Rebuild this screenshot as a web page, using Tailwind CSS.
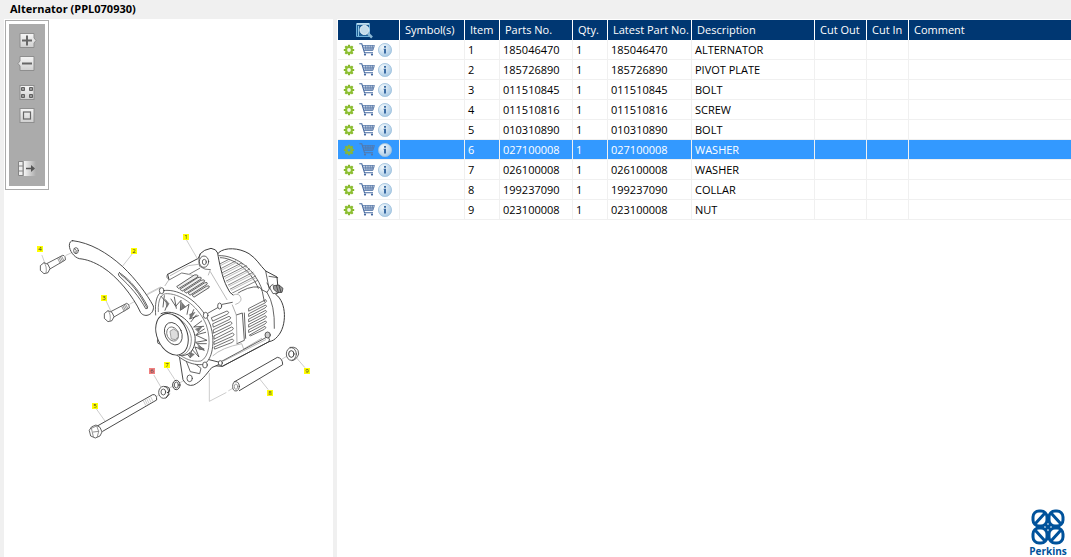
<!DOCTYPE html>
<html lang="en">
<head>
    <meta charset="UTF-8">
    <meta name="viewport" content="width=device-width, initial-scale=1.0">
    <script src="https://cdn.jsdelivr.net/npm/@tailwindcss/browser@4"></script>
    <title>Alternator (PPL070930)</title>
</head>
<body class="h-screen flex flex-col bg-[#f0f0f0] text-black text-[11px] leading-4 font-['Open_Sans','Noto_Sans',sans-serif]">

    <!-- shared icons -->
    <svg class="absolute h-0 w-0">
        <linearGradient id="btnFill" x1="0" y1="0" x2="0" y2="1"><stop offset="0" stop-color="#f6f6f6"/><stop offset="1" stop-color="#cfcfcf"/></linearGradient>
        <linearGradient id="exitFill"><stop offset="0" stop-color="#f4f4f4"/><stop offset="1" stop-color="#ababab"/></linearGradient>
        <radialGradient id="infoFill" cx=".35" cy=".3" r=".8"><stop offset="0" stop-color="#f2f8fc"/><stop offset="1" stop-color="#a3c6e3"/></radialGradient>
        <symbol id="gear" viewBox="0 0 12 12">
            <g stroke="#86b82c" stroke-width="2.2"><path d="M6 .8V11.200M.8 6H11.200M2.300 2.300L9.700 9.700M9.700 2.300L2.300 9.700"/></g>
            <circle cx="6" cy="6" r="3.900" fill="#8cbf30"/>
            <circle cx="6" cy="6" r="1.900" fill="#f4fae8"/>
        </symbol>
        <symbol id="gearOn" viewBox="0 0 12 12">
            <g stroke="#7fb243" stroke-width="2.2"><path d="M6 .8V11.200M.8 6H11.200M2.300 2.300L9.700 9.700M9.700 2.300L2.300 9.700"/></g>
            <circle cx="6" cy="6" r="3.900" fill="#86b83c"/>
            <circle cx="6" cy="6" r="1.500" fill="#3399ff"/>
        </symbol>
        <symbol id="cart" viewBox="0 0 16 13">
            <path d="M3.500 2.500H15.500L13.800 7.500L5 8Z" fill="currentColor" fill-opacity=".15"/>
            <path d="M.3 .8H2.800L5.500 9.800H14" fill="none" stroke="currentColor" stroke-width="1.100"/>
            <path d="M3.500 2.500H15.500L13.800 7.500H5M4.200 4.200H15M4.700 5.900H14.400M6.500 2.500L7 7.500M9 2.500V7.500M11.300 2.500L11 7.500M13.500 2.500L12.800 7.500" fill="none" stroke="currentColor" stroke-width=".7"/>
            <circle cx="6" cy="11.600" r="1.100" fill="currentColor"/><circle cx="13" cy="11.600" r="1.100" fill="currentColor"/>
        </symbol>
        <symbol id="info" viewBox="0 0 14 14">
            <circle cx="7" cy="7" r="6.600" fill="url(#infoFill)" stroke="#9fc1dd" stroke-width=".8"/>
            <path d="M6 3H8V4.700H6ZM5.500 5.800H8V10.500H6V6.500H5.500Z" fill="#3a6ba3"/>
        </symbol>
    </svg>

    <header class="h-[19px] shrink-0 pl-[10px]">
        <h1 class="font-bold leading-[18px]">Alternator (PPL070930)</h1>
    </header>

    <div class="flex flex-1 min-h-0 pl-1">
        <aside class="relative w-[329px] shrink-0 bg-white">
            <!-- zoom toolbar -->
            <div class="absolute left-px top-px z-10 w-11 border border-[#ababab] bg-white p-[3px]">
                <div class="flex h-[162px] flex-col items-center bg-[#ababab] pt-2">
                    <button aria-label="Zoom in" class="h-[17px] w-5">
                        <svg viewBox="0 0 20 17" class="h-[17px] w-5"><path d="M3 1.500H17V6L19 8.500L17 11V15.500H3Z" fill="url(#btnFill)" stroke="#8e8e8e"/><path d="M10 3.500V13.500M5 8.500H15" stroke="#666" stroke-width="2"/></svg>
                    </button>
                    <button aria-label="Zoom out" class="mt-[6px] h-[17px] w-5">
                        <svg viewBox="0 0 20 17" class="h-[17px] w-5"><path d="M3 1.500H17V15.500H3V11L1 8.500L3 6Z" fill="url(#btnFill)" stroke="#8e8e8e"/><path d="M5 8.500H15" stroke="#666" stroke-width="2"/></svg>
                    </button>
                    <button aria-label="Fit to window" class="mt-3 h-[17px] w-5">
                        <svg viewBox="0 0 20 17" class="h-[17px] w-5"><rect x="3" y="1.500" width="14" height="14" fill="url(#btnFill)" stroke="#8e8e8e"/><g fill="#999" stroke="#606060"><path d="M4.500 3.500H7.500V6.500H4.500ZM12.500 3.500H15.500V6.500H12.500ZM4.500 10.500H7.500V13.500H4.500ZM12.500 10.500H15.500V13.500H12.500Z"/></g></svg>
                    </button>
                    <button aria-label="Original size" class="mt-[6px] h-[17px] w-5">
                        <svg viewBox="0 0 20 17" class="h-[17px] w-5"><rect x="3" y="1.500" width="14" height="14" fill="url(#btnFill)" stroke="#8e8e8e"/><rect x="6.500" y="5" width="7" height="7" fill="none" stroke="#666" stroke-width="1.200"/></svg>
                    </button>
                    <button aria-label="Hide panel" class="mt-9 h-[17px] w-5">
                        <svg viewBox="0 0 20 17" class="h-[17px] w-5"><path d="M7 1H19V16H7Z" fill="url(#exitFill)"/><path d="M1.500 1.500H6V15.500H1.500ZM1.500 6H6M1.500 11H6" fill="#eee" stroke="#858585"/><path d="M9 8.500H16" stroke="#555" stroke-width="1.500"/><path d="M14 5L18 8.500L14 12Z" fill="#555"/></svg>
                    </button>
                </div>
            </div>

            <!-- exploded view -->
            <svg viewBox="4 19 329 430" class="block w-full" fill="none" stroke="#3c3c3c" stroke-width="2.400" stroke-linejoin="round" stroke-linecap="round" role="img" aria-label="Alternator exploded view">
                <!-- bracket and bolts 3, 4 -->
                <g transform="translate(30 230) scale(.33333)">
                    <path d="M36 76L44 98M308 70L278 108M228 212L242 242M108 76L138 62M300 222L390 174" stroke="#aaa" stroke-width="1.800"/>
                    <path d="M128 32C180 38 232 68 278 110C318 148 352 194 370 228C374 252 346 266 332 248C308 196 262 140 218 112C192 96 170 88 148 86C132 82 118 62 118 46C118 38 122 32 128 32Z" fill="#fff" stroke-width="2.800"/>
                    <ellipse cx="138" cy="62" rx="7" ry="9"/><path d="M134 56Q142 60 138 69" />
                    <path d="M268 128C300 148 332 188 353 230Q354 238 347 236C328 200 300 168 267 138Q262 130 268 128ZM272 134C304 158 330 192 350 232"/>
                    <path d="M52 100L98 76Q107 76 106 90L58 118" fill="#fff"/><path d="M83 85L90 99M87 83L94 97M91 81L98 94M95 79L102 92" stroke="#777"/>
                    <path d="M32 106L42 98L54 103L60 116L54 128L42 131L32 122Z" fill="#fff"/><path d="M42 98Q52 108 48 130" stroke="#888"/>
                    <path d="M244 244L290 220Q299 221 298 234L252 261" fill="#fff"/><path d="M275 229L282 243M279 227L286 241M283 225L290 238M287 223L294 236" stroke="#777"/>
                    <path d="M224 250L234 242L246 247L252 260L246 272L234 275L224 266Z" fill="#fff"/><path d="M234 242Q244 252 240 274" stroke="#888"/>
                </g>

                <!-- long bolt 5, washers 6 and 7, collar 8, nut 9 -->
                <g transform="translate(80 340) scale(.33333)">
                    <path d="M50 208L77 246M222 106L242 140M262 84L284 118M388 100V184L438 158M446 152L460 144M605 58L628 44M648 52L674 82M540 118L564 148M232 168L240 162M268 144L280 138M300 128L322 116" stroke="#aaa" stroke-width="1.800"/>
                    <path d="M52 258L218 164Q231 162 230 180L68 274" fill="#fff" stroke-width="2.800"/><path d="M190 182L197 196M195 179L202 193M200 176L207 190M206 173L213 187M212 170L219 184" stroke="#999" stroke-width="1.500"/>
                    <path d="M36 260L48 255L60 262L66 276L60 288L46 294L32 288L28 272Z" fill="#fff"/><path d="M34 264L40 290M36 264L50 258L56 274L52 290M40 276L56 274" stroke="#777"/>
                    <ellipse cx="251" cy="157" rx="15" ry="18" fill="#fff"/><ellipse cx="250" cy="156" rx="7" ry="9"/><path d="M254 140Q270 138 269 154L262 158M258 174L268 162" stroke-width="3"/>
                    <ellipse cx="289" cy="135" rx="11" ry="14" fill="#fff" stroke-width="3"/><ellipse cx="289" cy="135" rx="6" ry="9"/>
                    <path d="M462 126L592 52Q608 54 608 74L478 152" fill="#fff" stroke-width="2.800"/><ellipse cx="468" cy="139" rx="10" ry="14" fill="#fff"/><ellipse cx="468" cy="140" rx="5" ry="8" stroke="#888"/>
                    <path d="M630 22Q656 18 656 42Q650 60 636 62" fill="#fff"/><ellipse cx="634" cy="42" rx="15" ry="19" fill="#fff"/><ellipse cx="634" cy="42" rx="8" ry="10" stroke-width="3"/>
                </g>

                <!-- alternator body -->
                <g transform="translate(145 225) scale(.33333)">
                    <path d="M8 206L46 186" stroke="#aaa" stroke-width="1.800"/>
                    <path d="M222 82C240 66 282 68 312 86C334 100 344 120 362 138L396 156L400 202L392 208C426 232 426 304 398 334C390 344 382 348 372 350L232 424L180 420L122 400L190 120Z" fill="#fff" stroke-width="3"/>
                    <path d="M222 92C270 90 330 130 352 196M226 98C262 98 316 132 340 190"/>
                    <path d="M362 138L372 190M372 154L398 158M366 174L384 206L398 204M354 196L366 202Q390 240 388 310M366 202L374 190Q376 180 384 178"/>
                    <path d="M386 182L402 180L414 190L411 202L398 203L387 194Z" fill="#999" stroke-width="2.400"/><path d="M394 181L400 202M402 181L408 202"/>
                    <!-- rear vents -->
                    <g stroke="#555" stroke-width="2.200">
                        <path d="M226 116L250 104M229 130L272 108M232 143L290 114M236 156L304 122M244 168L314 132M250 180L324 142M256 192L332 153M262 204L338 166"/>
                        <path d="M228 121L256 107M231 135L278 111M235 148L294 118M241 160L308 126M247 172L318 136M253 184L327 147M259 196L334 158" stroke="#aaa"/>
                    </g>
                    <path d="M270 210Q310 182 342 186Q350 190 352 200L358 230"/>
                    <g stroke-width="2.200"><path d="M312 250L362 224Q368 228 360 234L312 258ZM312 266L362 240Q368 244 360 249L312 274ZM312 282L362 256Q368 260 360 265L312 290ZM312 298L362 272Q368 276 360 281L312 306ZM312 314L362 288Q368 292 360 297L312 322ZM314 330L360 304Q366 308 358 313L318 332Z"/></g>
                    <!-- mounting ear -->
                    <path d="M68 148L160 100L166 86Q176 74 198 70Q214 72 218 84C222 110 232 160 246 186Q256 208 270 204Q288 204 290 220L288 230L272 240L246 228L226 240L186 262L60 182Q50 178 72 164Z" fill="#fff" stroke="none"/>
                    <path d="M68 148L160 100L166 86Q176 74 198 70Q214 72 218 84C222 110 232 160 246 186Q254 206 264 210M72 164L68 148" stroke-width="3"/>
                    <path d="M68 148Q60 158 74 164L110 144L132 148L164 130M166 86Q158 108 164 124Q180 136 196 134" stroke="#555"/>
                    <path d="M76 152L130 122L160 118M128 148L158 154M196 140L246 224M196 134L190 150M264 210Q284 202 288 220Q290 232 272 238M60 182L72 164" stroke="#aaa"/>
                    <path d="M124 44L160 106" stroke="#aaa" stroke-width="1.800"/>
                    <ellipse cx="177" cy="110" rx="14" ry="17"/><ellipse cx="178" cy="111" rx="6" ry="8"/>
                    <!-- top vents -->
                    <path d="M96 184L148 150Q162 148 158 156L102 190ZM106 192L158 158Q172 154 168 162L112 198ZM118 198L168 166Q182 162 178 170L124 204ZM130 204L178 174Q190 170 186 178L136 210ZM142 210L184 184Q196 180 192 188L148 216Z" stroke-width="2.400" fill="#eee"/>
                    <!-- front side -->
                    <path d="M186 262L226 240L246 232L270 240L276 340L260 370L204 392Z" fill="#fff" stroke="none"/>
                    <path d="M190 264L218 248M232 238L262 232M274 270L292 264L298 346L276 356M298 264L302 340"/>
                    <path d="M262 240L274 270L276 356" stroke="#999"/>
                    <path d="M200 278L246 258Q256 262 246 268L204 288ZM204 296L252 274Q262 278 252 284L206 306ZM206 314L256 290Q266 294 256 300L206 324ZM208 332L260 306Q270 310 260 316L208 342ZM208 350L262 324Q272 328 262 334L208 358ZM208 366L262 342Q270 346 262 352L210 372Z" stroke-width="2.200"/>
                    <path d="M204 392Q230 368 290 356L296 372L350 340M236 408L362 344" stroke="#aaa"/>
                    <path d="M228 410L366 336Q378 340 372 350L232 424Q222 420 228 410Z"/>
                    <ellipse cx="224" cy="243" rx="6" ry="9" fill="#fff"/><ellipse cx="368" cy="330" rx="8" ry="9" fill="#ccc"/>
                    <!-- lower foot -->
                    <path d="M102 386L114 464Q126 486 146 480C168 470 182 450 200 428L232 414L176 400Z" fill="#fff" stroke-width="2.800"/><path d="M122 404L136 440L164 446L168 430L150 416"/>
                    <ellipse cx="134" cy="460" rx="8" ry="10"/>
                    <!-- drive end housing -->
                    <path d="M32 270C28 220 40 196 66 196C116 196 172 240 196 300C212 350 202 406 176 418C140 424 100 402 70 364" fill="#fff"/>
                    <path d="M40 260C38 220 50 204 68 206C114 208 164 250 184 300C200 350 192 396 168 408C140 412 120 400 104 390" stroke="#666"/>
                    <path d="M48 214L68 236L60 256M78 222L92 244L108 226L106 256L132 238L126 268M146 254L134 282L160 272M170 288L146 306L176 304M182 322L152 330L186 346L152 352L178 376L150 366L162 396L140 372L136 398L122 382M58 212L54 246M88 216L94 250M154 270L138 290M178 312L156 326M184 356L158 356"/>
                    <path d="M62 224L72 236L66 246ZM110 232L122 246L108 254ZM134 268L150 262L138 280ZM152 312L172 304L160 320ZM160 362L178 372L164 374ZM132 382L148 388L136 398Z" fill="#777" stroke="#666" stroke-width="1.500"/>
                    <g fill="#fff"><ellipse cx="50" cy="197" rx="7" ry="9"/><ellipse cx="182" cy="271" rx="7" ry="9"/><ellipse cx="180" cy="420" rx="7" ry="9"/><ellipse cx="226" cy="414" rx="6" ry="7"/><ellipse cx="44" cy="348" rx="7" ry="9"/></g>
                    <!-- pulley -->
                    <path d="M48 266C88 248 142 286 150 334C154 372 132 398 102 390" fill="#fff" stroke-width="2.800"/>
                    <path d="M60 266C98 266 134 300 139 340C140 368 126 388 112 390" stroke="#777"/>
                    <ellipse cx="81" cy="328" rx="45" ry="65" transform="rotate(-24 81 328)" fill="#fff" stroke-width="2.800"/>
                    <ellipse cx="85" cy="326" rx="25" ry="35" transform="rotate(-24 85 326)"/>
                    <ellipse cx="83" cy="327" rx="17" ry="22" transform="rotate(-24 83 327)" stroke="#666"/>
                    <path d="M76 318L86 312L98 320L100 334L92 344L80 342Z" fill="#ddd" stroke="#888"/>
                </g>

                <g id="callouts" stroke="none" font-size="6" text-anchor="middle"></g>
            </svg>
        </aside>

        <main class="ml-1 flex flex-1 flex-col border-l border-t border-white bg-white">
            <table class="w-full table-fixed border-separate border-spacing-0">
                <colgroup>
                    <col class="w-[62px]"><col class="w-[65px]"><col class="w-[35px]"><col class="w-[73px]"><col class="w-[35px]"><col class="w-[84px]"><col class="w-[123px]"><col class="w-[52px]"><col class="w-[42px]"><col>
                </colgroup>
                <thead>
                    <tr class="h-5 bg-[#003772] text-left text-white [&>th]:border-r [&>th]:border-white [&>th]:py-0 [&>th]:pl-[5px] [&>th]:font-normal [&>th]:whitespace-nowrap [&>th:last-child]:border-r-0">
                        <th aria-label="Actions">
                            <svg viewBox="0 0 18 17" class="ml-[13px] h-[17px] w-[18px]">
                                <path d="M.5 1.500H13.500V14.500H.5Z" fill="#1f5f96" stroke="#6fb2dc"/>
                                <path d="M1 2H13" stroke="#d5ecf8" stroke-width="1.500"/><path d="M2.500 4V14" stroke="#8fc6e6"/>
                                <circle cx="8.500" cy="8" r="4.500" fill="#c3dceb" stroke="#e8f3fa"/>
                                <path d="M12 11.500L16 15.500" stroke="#8db9d6" stroke-width="2.500"/>
                            </svg>
                        </th>
                        <th>Symbol(s)</th><th>Item</th><th>Parts No.</th><th>Qty.</th><th>Latest Part No.</th><th>Description</th><th>Cut Out</th><th>Cut In</th><th>Comment</th>
                    </tr>
                </thead>
                <tbody id="parts"></tbody>
            </table>

            <!-- brand -->
            <div class="mt-auto mr-[3px] flex w-10 flex-col items-center self-end text-[#00529b]">
                <svg viewBox="0 0 34 36" class="h-9 w-[34px]" fill="none" stroke="currentColor" stroke-width="3">
                    <rect x="2" y="2" width="14" height="15" rx="6"/><rect x="18" y="2" width="14" height="15" rx="6"/>
                    <rect x="2" y="19" width="14" height="15" rx="6"/><rect x="18" y="19" width="14" height="15" rx="6"/>
                    <path d="M4 15L14 4M20 4L30 15M4 21L14 32M20 32L30 21M14 15L20 21M20 15L14 21"/>
                </svg>
                <span class="text-[10px] font-bold leading-3">Perkins</span>
            </div>
        </main>
    </div>

</body>
<script>
    const selected = 6;
    const parts = [
        [1, '185046470', 1, 'ALTERNATOR'],
        [2, '185726890', 1, 'PIVOT PLATE'],
        [3, '011510845', 1, 'BOLT'],
        [4, '011510816', 1, 'SCREW'],
        [5, '010310890', 1, 'BOLT'],
        [6, '027100008', 1, 'WASHER'],
        [7, '026100008', 1, 'WASHER'],
        [8, '199237090', 1, 'COLLAR'],
        [9, '023100008', 1, 'NUT']
    ];

    // centre of each numbered tag on the drawing
    const tags = [[186, 237], [134, 251], [104, 298], [40, 249], [95, 406], [152, 371], [167, 365], [270, 393], [307, 371]];

    parts.forEach(([item, no, qty, desc]) => {
        const on = item === selected;
        const row = document.createElement('tr');
        row.className = on ? 'h-5 bg-[#3399ff] text-white' : 'h-5';
        row.innerHTML = `
            <td class="border-r border-b border-[#f0f0f0] p-0">
                <div class="flex items-center pl-[5px]">
                    <button aria-label="Options"><svg class="h-3 w-3"><use href="${on ? '#gearOn' : '#gear'}"/></svg></button>
                    <button aria-label="Add to cart" class="ml-1 ${on ? 'text-[#5577a8]' : 'text-[#44689f]'}"><svg class="h-[13px] w-4"><use href="#cart"/></svg></button>
                    <button aria-label="Information" class="ml-[3px]"><svg class="h-[14px] w-[14px]"><use href="#info"/></svg></button>
                </div>
            </td>
            <td class="border-r border-b border-[#f0f0f0] p-0"></td>
            <td class="border-r border-b border-[#f0f0f0] py-0 pl-[3px]">${item}</td>
            <td class="border-r border-b border-[#f0f0f0] py-0 pl-[3px]">${no}</td>
            <td class="border-r border-b border-[#f0f0f0] py-0 pl-[3px]">${qty}</td>
            <td class="border-r border-b border-[#f0f0f0] py-0 pl-[3px]">${no}</td>
            <td class="border-r border-b border-[#f0f0f0] py-0 pl-[3px]">${desc}</td>
            <td class="border-r border-b border-[#f0f0f0] p-0"></td>
            <td class="border-r border-b border-[#f0f0f0] p-0"></td>
            <td class="border-b border-[#f0f0f0] p-0"></td>`;
        document.querySelector('#parts').appendChild(row);
    });

    document.querySelector('#callouts').innerHTML = tags.map(([x, y], i) => `
        <rect x="${x - 3}" y="${y - 3}" width="6" height="6" fill="${i + 1 === selected ? '#f08080' : '#ffff00'}"/>
        <text x="${x}" y="${y + 2}" fill="#333">${i + 1}</text>`).join('');
</script>
</html>
